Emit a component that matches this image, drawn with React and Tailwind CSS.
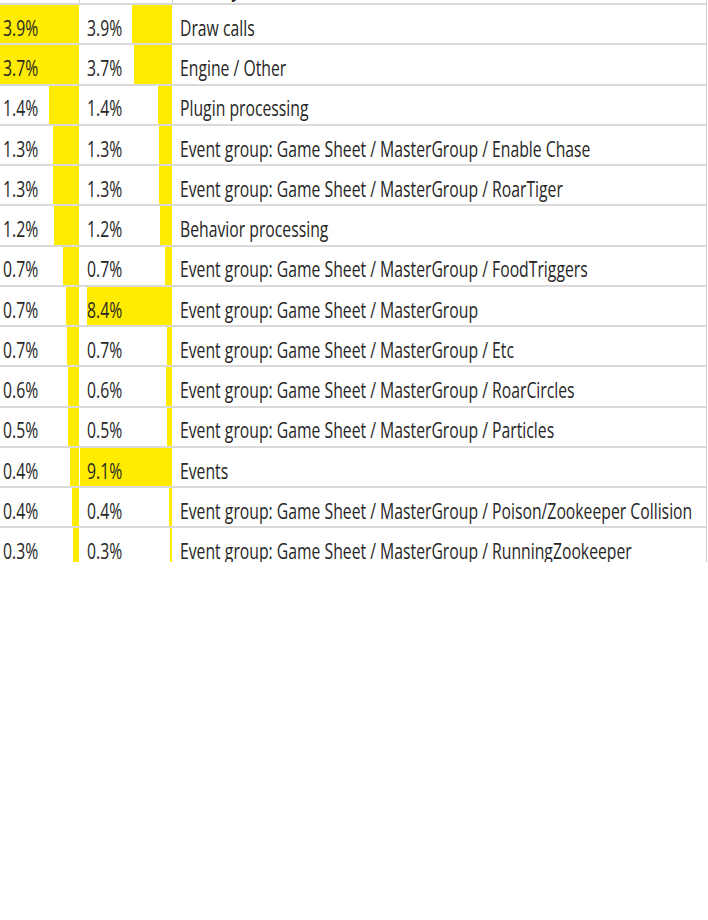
const rows = [
  { self: "3.9%", selfBar: 79, total: "3.9%", totalBar: 40, name: "Draw calls" },
  { self: "3.7%", selfBar: 79, total: "3.7%", totalBar: 38, name: "Engine / Other" },
  { self: "1.4%", selfBar: 30, total: "1.4%", totalBar: 14, name: "Plugin processing" },
  { self: "1.3%", selfBar: 26, total: "1.3%", totalBar: 13, name: "Event group: Game Sheet / MasterGroup / Enable Chase" },
  { self: "1.3%", selfBar: 26, total: "1.3%", totalBar: 13, name: "Event group: Game Sheet / MasterGroup / RoarTiger" },
  { self: "1.2%", selfBar: 25, total: "1.2%", totalBar: 12, name: "Behavior processing" },
  { self: "0.7%", selfBar: 16, total: "0.7%", totalBar: 7, name: "Event group: Game Sheet / MasterGroup / FoodTriggers" },
  { self: "0.7%", selfBar: 13, total: "8.4%", totalBar: 85, name: "Event group: Game Sheet / MasterGroup" },
  { self: "0.7%", selfBar: 12, total: "0.7%", totalBar: 5, name: "Event group: Game Sheet / MasterGroup / Etc" },
  { self: "0.6%", selfBar: 11, total: "0.6%", totalBar: 6, name: "Event group: Game Sheet / MasterGroup / RoarCircles" },
  { self: "0.5%", selfBar: 11, total: "0.5%", totalBar: 5, name: "Event group: Game Sheet / MasterGroup / Particles" },
  { self: "0.4%", selfBar: 9, total: "9.1%", totalBar: 92, name: "Events" },
  { self: "0.4%", selfBar: 7, total: "0.4%", totalBar: 3, name: "Event group: Game Sheet / MasterGroup / Poison/Zookeeper Collision" },
  { self: "0.3%", selfBar: 6, total: "0.3%", totalBar: 2, name: "Event group: Game Sheet / MasterGroup / RunningZookeeper" },
];

// the profiler renders its text narrow, so squeeze it horizontally
function Txt({ children }) {
  return <span className="inline-block origin-left scale-x-[0.75] whitespace-nowrap">{children}</span>;
}

function Cell({ width, label, bar, pad }) {
  return (
    <div className={`relative h-full shrink-0 ${width}`}>
      <div className="absolute right-0 top-0 h-full bg-[#ffec00]" style={{ width: bar }} />
      <div className={`relative flex h-full items-center pt-[9px] ${pad}`}>
        <Txt>{label}</Txt>
      </div>
    </div>
  );
}

export default function App() {
  return (
    <div className="h-[920px] w-[708px] bg-white">
      <div
        className="h-[562px] w-[707px] overflow-hidden border-r border-[#d0d0d0] text-[21px] text-[#262626]"
        style={{ fontFamily: '"Open Sans", "Liberation Sans", sans-serif' }}
      >
        {/* header row, scrolled almost out of view */}
        <div className="-mt-[35px] flex h-[40px] border-b-2 border-[#dadada] font-bold">
          <div className="w-[80px] shrink-0 border-r border-[#cfcfcf] pl-[3px] pt-[9px]">
            <Txt>Self</Txt>
          </div>
          <div className="w-[93px] shrink-0 border-r border-[#cfcfcf] pl-[7px] pt-[9px]">
            <Txt>Total</Txt>
          </div>
          <div className="pl-[7px] pt-[9px]">
            <Txt>Activity</Txt>
          </div>
        </div>

        {rows.map((r, i) => (
          <div key={i} className="flex h-[40.25px] border-b-2 border-[#dadada]">
            <Cell width="w-[79px]" label={r.self} bar={r.selfBar} pad="pl-[3px]" />
            <div className="w-px shrink-0 bg-white" />
            <Cell width="w-[92px]" label={r.total} bar={r.totalBar} pad="pl-[7px]" />
            <div className="w-px shrink-0 bg-white" />
            <div className="flex h-full items-center pl-[7px] pt-[9px]">
              <Txt>{r.name}</Txt>
            </div>
          </div>
        ))}
      </div>
    </div>
  );
}
